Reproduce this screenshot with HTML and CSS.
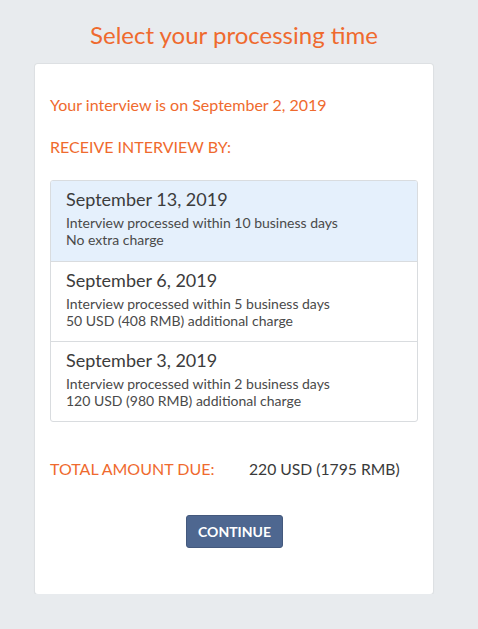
FILE: index.html
```html
<!DOCTYPE html>
<html>
<head>
<meta charset="utf-8">
<link rel="stylesheet" href="styles.css">
</head>
<body>
<div class="page">
  <h1 class="title">Select your processing time</h1>
  <div class="card">
    <p class="intro">Your interview is on September 2, 2019</p>
    <p class="label">RECEIVE INTERVIEW BY:</p>
    <ul class="options">
      <li class="option selected">
        <div class="date">September 13, 2019</div>
        <div class="sub">Interview processed within 10 business days</div>
        <div class="sub">No extra charge</div>
      </li>
      <li class="option">
        <div class="date">September 6, 2019</div>
        <div class="sub">Interview processed within 5 business days</div>
        <div class="sub">50 USD (408 RMB) additional charge</div>
      </li>
      <li class="option">
        <div class="date">September 3, 2019</div>
        <div class="sub">Interview processed within 2 business days</div>
        <div class="sub">120 USD (980 RMB) additional charge</div>
      </li>
    </ul>
    <div class="total">
      <span class="total-label">TOTAL AMOUNT DUE:</span>
      <span class="total-value">220 USD (1795 RMB)</span>
    </div>
    <div class="actions">
      <button class="btn">CONTINUE</button>
    </div>
  </div>
</div>
</body>
</html>
```

FILE: styles.css
```css
html, body {
  margin: 0;
  padding: 0;
}
body {
  background: #e8ebee;
  font-family: Lato, "Open Sans", sans-serif;
  color: #333;
}
.page {
  width: 398px;
  margin-left: 35px;
  padding-top: 20px;
}
.title {
  margin: 0 0 14px;
  text-align: center;
  font-size: 24px;
  font-weight: 400;
  color: #ef6a2e;
  line-height: 30px;
}
.card {
  background: #fff;
  border-radius: 3px;
  box-shadow: 0 0 0 1px #dde0e3, 0 1px 2px rgba(0,0,0,0.08);
  padding: 31px 15px 0;
  height: 530px;
  box-sizing: border-box;
}
.intro {
  margin: 0;
  font-size: 16px;
  line-height: 20px;
  color: #ef6a2e;
}
.label {
  margin: 22px 0 0;
  font-size: 16px;
  line-height: 20px;
  color: #ef6a2e;
}
.options {
  list-style: none;
  margin: 23px 0 0;
  padding: 0;
  border: 1px solid #d9dcdf;
  border-radius: 3px;
  overflow: hidden;
}
.option {
  padding: 7px 15px 0;
  border-top: 1px solid #d9dcdf;
  height: 80px;
  box-sizing: border-box;
}
.option:first-child {
  border-top: none;
  height: 80px;
}
.option.selected {
  background: #e5f0fc;
}
.date {
  font-size: 18px;
  line-height: 22px;
  color: #3c3c3c;
  margin-bottom: 4px;
}
.sub {
  font-size: 14px;
  line-height: 17px;
  color: #4a4a4a;
}
.total {
  display: flex;
  margin-top: 37px;
  font-size: 16px;
  line-height: 20px;
}
.total-label {
  color: #ef6a2e;
  width: 199px;
}
.total-value {
  color: #3a3a3a;
  font-size: 15.7px;
}
.actions {
  display: flex;
  justify-content: center;
  margin-top: 36px;
}
.btn {
  width: 97px;
  height: 33px;
  background: #4e6790;
  color: #fff;
  border: 1px solid #44597d;
  border-radius: 3px;
  font-family: Lato, sans-serif;
  font-weight: 700;
  font-size: 14px;
  padding: 0;
  margin-left: 1px;
}
```
